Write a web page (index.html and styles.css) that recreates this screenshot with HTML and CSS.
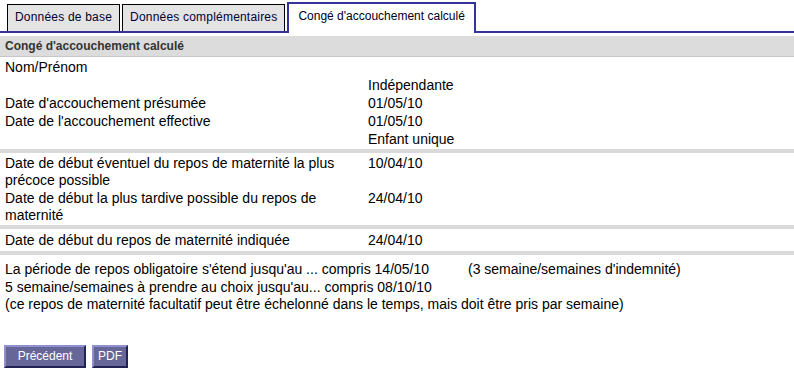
FILE: index.html
```html
<!DOCTYPE html>
<html lang="fr">
<head>
    <meta charset="UTF-8">
    <title>Congé d'accouchement calculé</title>
    <link rel="stylesheet" href="styles.css">
</head>
<body>
    <div class="tabs">
        <div class="tab">Données de base</div>
        <div class="tab">Données complémentaires</div>
        <div class="tab active">Congé d'accouchement calculé</div>
    </div>

    <div class="header">Congé d'accouchement calculé</div>

    <div class="section">
        <div class="label">Nom/Prénom</div><div class="value"></div>
        <div class="label"></div><div class="value">Indépendante</div>
        <div class="label">Date d'accouchement présumée</div><div class="value">01/05/10</div>
        <div class="label">Date de l'accouchement effective</div><div class="value">01/05/10</div>
        <div class="label"></div><div class="value">Enfant unique</div>
    </div>
    <div class="bar"></div>

    <div class="section">
        <div class="label">Date de début éventuel du repos de maternité la plus précoce possible</div><div class="value">10/04/10</div>
        <div class="label">Date de début la plus tardive possible du repos de maternité</div><div class="value">24/04/10</div>
    </div>
    <div class="bar"></div>

    <div class="section single">
        <div class="label">Date de début du repos de maternité indiquée</div><div class="value">24/04/10</div>
    </div>
    <div class="bar"></div>

    <div class="notes">
        <p>La période de repos obligatoire s'étend jusqu'au ... compris 14/05/10 <span class="extra">(3 semaine/semaines d'indemnité)</span></p>
        <p>5 semaine/semaines à prendre au choix jusqu'au... compris 08/10/10</p>
        <p>(ce repos de maternité facultatif peut être échelonné dans le temps, mais doit être pris par semaine)</p>
    </div>

    <div class="buttons">
        <button type="button" class="btn-prev">Précédent</button>
        <button type="button" class="btn-pdf">PDF</button>
    </div>
</body>
</html>
```

FILE: styles.css
```css
/* Page */
body {
    margin: 0;
    font-family: "Liberation Sans", Arial, sans-serif;
    font-size: 14px;
    color: #000;
    background: #fff;
}

/* Tabs */
.tabs {
    display: flex;
    align-items: flex-end;
    gap: 2px;
    margin-top: 2px;
    padding-left: 7px;
    border-bottom: 2px solid #333399;
}
.tab {
    height: 26px;
    line-height: 25px;
    padding: 0 7px;
    font-size: 12px;
    letter-spacing: 0.2px;
    color: #000033;
    background-color: #e4e4e4;
    border: 1px solid #000;
    border-bottom: none;
}
.tab.active {
    height: 29px;
    line-height: 24px;
    padding: 0 9px;
    margin-bottom: -2px;
    letter-spacing: 0;
    color: #000022;
    background-color: #fff;
    border: 2px solid #333399;
    border-bottom: none;
}

/* Section header */
.header {
    margin-top: 3px;
    height: 20px;
    line-height: 20px;
    padding-left: 5px;
    font-size: 12px;
    font-weight: bold;
    color: #333;
    background-color: #dcdcdc;
    border-bottom: 1px solid #c6c6c6;
}

/* Label / value rows */
.section {
    display: grid;
    grid-template-columns: 363px auto;
    row-gap: 1px;
    padding: 2px 0 1px 5px;
    line-height: 17px;
}
.section.single {
    padding: 3px 0 2px 5px;
}
.label {
    min-height: 17px;
    padding-right: 20px;
}
.bar {
    height: 4px;
    background-color: #dadada;
}

/* Notes */
.notes {
    padding: 6px 5px 0;
    line-height: 17.5px;
}
.notes p {
    margin: 0;
}
.extra {
    margin-left: 35px;
}

/* Buttons */
.buttons {
    display: flex;
    gap: 6px;
    padding: 31px 0 0 4px;
}
button {
    height: 23px;
    padding: 0;
    font-family: "Liberation Sans", Arial, sans-serif;
    font-size: 12px;
    color: #fff;
    background-color: #666699;
    border: 2px solid;
    border-color: #8f8fd0 #222255 #222255 #8f8fd0;
    cursor: pointer;
}
.btn-prev {
    width: 82px;
}
.btn-pdf {
    width: 36px;
}
```
